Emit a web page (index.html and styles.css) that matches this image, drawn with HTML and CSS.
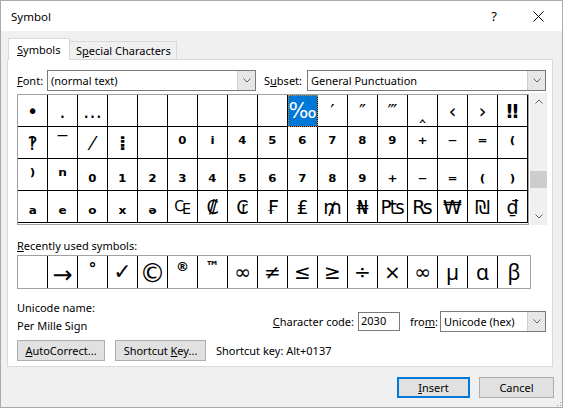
FILE: index.html
```html
<!DOCTYPE html>
<html>
<head>
<meta charset="utf-8">
<link rel="stylesheet" href="styles.css">
</head>
<body>
<div class="window">
  <div class="titlebar">
    <span class="title">Symbol</span>
    <span class="tb-btn help">?</span>
    <span class="tb-btn close"><svg width="11" height="11" viewBox="0 0 11 11"><path d="M0.5 0.5 L10.5 10.5 M10.5 0.5 L0.5 10.5" stroke="#000" stroke-width="1"/></svg></span>
  </div>
  <div class="tabs">
    <div class="tab active"><span><u>S</u>ymbols</span></div>
    <div class="tab"><span>S<u>p</u>ecial Characters</span></div>
  </div>
  <div class="panel">
    <div class="row-font">
      <span class="lbl font-lbl"><u>F</u>ont:</span>
      <div class="combo font-combo"><span class="combo-text">(normal text)</span><span class="drop"><svg width="8" height="5" viewBox="0 0 8 5"><path d="M0.5 0.5 L4 4 L7.5 0.5" fill="none" stroke="#606060"/></svg></span></div>
      <span class="lbl subset-lbl">S<u>u</u>bset:</span>
      <div class="combo subset-combo"><span class="combo-text">General Punctuation</span><span class="drop"><svg width="8" height="5" viewBox="0 0 8 5"><path d="M0.5 0.5 L4 4 L7.5 0.5" fill="none" stroke="#606060"/></svg></span></div>
    </div>
    <div class="grid-wrap">
      <div class="grid">
        <div class="c">•</div><div class="c">․</div><div class="c">…</div><div class="c"></div><div class="c"></div><div class="c"></div><div class="c"></div><div class="c"></div><div class="c"></div><div class="c sel">‰</div><div class="c">′</div><div class="c">″</div><div class="c">‴</div><div class="c">‸</div><div class="c">‹</div><div class="c">›</div><div class="c b">‼</div>
        <div class="c">‽</div><div class="c">‾</div><div class="c">⁄</div><div class="c b">⁞</div><div class="c"></div><div class="c b">⁰</div><div class="c b">ⁱ</div><div class="c b">⁴</div><div class="c b">⁵</div><div class="c b">⁶</div><div class="c b">⁷</div><div class="c b">⁸</div><div class="c b">⁹</div><div class="c b">⁺</div><div class="c b">⁻</div><div class="c b">⁼</div><div class="c b">⁽</div>
        <div class="c b">⁾</div><div class="c b">ⁿ</div><div class="c b">₀</div><div class="c b">₁</div><div class="c b">₂</div><div class="c b">₃</div><div class="c b">₄</div><div class="c b">₅</div><div class="c b">₆</div><div class="c b">₇</div><div class="c b">₈</div><div class="c b">₉</div><div class="c b">₊</div><div class="c b">₋</div><div class="c b">₌</div><div class="c b">₍</div><div class="c b">₎</div>
        <div class="c b">ₐ</div><div class="c b">ₑ</div><div class="c b">ₒ</div><div class="c b">ₓ</div><div class="c b">ₔ</div><div class="c">₠</div><div class="c">₡</div><div class="c">₢</div><div class="c">₣</div><div class="c">₤</div><div class="c">₥</div><div class="c">₦</div><div class="c">₧</div><div class="c">₨</div><div class="c">₩</div><div class="c">₪</div><div class="c">₫</div>
      </div>
      <div class="scrollbar">
        <div class="sb-btn"><svg width="8" height="5" viewBox="0 0 8 5"><path d="M0.5 4.5 L4 1 L7.5 4.5" fill="none" stroke="#606060"/></svg></div>
        <div class="sb-track"><div class="sb-thumb"></div></div>
        <div class="sb-btn"><svg width="8" height="5" viewBox="0 0 8 5"><path d="M0.5 0.5 L4 4 L7.5 0.5" fill="none" stroke="#606060"/></svg></div>
      </div>
    </div>
    <div class="recent-lbl"><u>R</u>ecently used symbols:</div>
    <div class="recent">
      <div class="r"></div><div class="r arrow">→</div><div class="r deg">°</div><div class="r check">✓</div><div class="r copy">©</div><div class="r reg">®</div><div class="r tm">™</div><div class="r">∞</div><div class="r">≠</div><div class="r">≤</div><div class="r">≥</div><div class="r">÷</div><div class="r">×</div><div class="r">∞</div><div class="r thin">µ</div><div class="r thin">α</div><div class="r thin last">β</div>
    </div>
    <div class="info">
      <div class="info-left">
        <div>Unicode name:</div>
        <div>Per Mille Sign</div>
      </div>
      <div class="info-right">
        <span class="lbl"><u>C</u>haracter code:</span>
        <div class="input">2030</div>
        <span class="lbl from-lbl">fro<u>m</u>:</span>
        <div class="combo from-combo"><span class="combo-text">Unicode (hex)</span><span class="drop"><svg width="8" height="5" viewBox="0 0 8 5"><path d="M0.5 0.5 L4 4 L7.5 0.5" fill="none" stroke="#606060"/></svg></span></div>
      </div>
    </div>
    <div class="btn-row">
      <div class="btn auto"><span><u>A</u>utoCorrect...</span></div>
      <div class="btn shortcut"><span>Shortcut <u>K</u>ey...</span></div>
      <span class="sk-text">Shortcut key: Alt+0137</span>
    </div>
  </div>
  <div class="footer">
    <div class="btn insert"><span><u>I</u>nsert</span></div>
    <div class="btn cancel"><span>Cancel</span></div>
    <div class="grip"><svg width="8" height="9" viewBox="0 0 8 9"><rect x="6" y="1" width="1" height="1" fill="#999"/><rect x="6" y="4" width="1" height="1" fill="#999"/><rect x="3" y="4" width="1" height="1" fill="#999"/><rect x="6" y="7" width="1" height="1" fill="#999"/><rect x="3" y="7" width="1" height="1" fill="#999"/><rect x="0" y="7" width="1" height="1" fill="#999"/></svg></div>
  </div>
</div>
</body>
</html>
```
FILE: styles.css
```css
html, body {
  margin: 0;
  padding: 0;
  background: #f0f0f0;
}
.window {
  width: 563px;
  height: 408px;
  box-sizing: border-box;
  border: 1px solid #aaaaaa;
  background: #f0f0f0;
  font-family: "Noto Sans", "DejaVu Sans", sans-serif;
  font-size: 11px;
  color: #000;
  display: flex;
  flex-direction: column;
  overflow: hidden;
}
u { text-decoration: underline; text-underline-offset: 1px; }

.titlebar {
  height: 30px;
  background: #fff;
  display: flex;
  align-items: center;
  padding-left: 10px;
  font-size: 11.5px;
}
.title { flex: 1; }
.tb-btn {
  width: 46px;
  height: 30px;
  display: flex;
  align-items: center;
  justify-content: center;
}
.help { font-size: 13px; margin-left: 2px; margin-right: -2px; }
.close { margin-right: 1px; }

.tabs {
  height: 28px;
  display: flex;
  align-items: flex-end;
  padding-left: 7px;
}
.tab {
  box-sizing: border-box;
  border: 1px solid #d9d9d9;
  border-bottom: none;
  display: flex;
  align-items: center;
  padding-bottom: 1px;
  white-space: nowrap;
}
.tab.active {
  width: 62px;
  height: 22px;
  margin-bottom: -1px;
  background: #fff;
  padding-left: 8px;
  position: relative;
  z-index: 1;
}
.tab:not(.active) {
  width: 108px;
  height: 18px;
  padding-left: 6px;
  margin-left: -1px;
  background: #f0f0f0;
}

.panel {
  margin-left: 6px;
  width: 546px;
  height: 308px;
  box-sizing: border-box;
  border: 1px solid #d9d9d9;
  background: #fff;
  padding: 10px 0 0 9px;
}

.row-font {
  display: flex;
  align-items: center;
  height: 21px;
}
.lbl { white-space: nowrap; }
.font-lbl { width: 30px; }
.subset-lbl { width: 43px; margin-left: 8px; }
.combo {
  box-sizing: border-box;
  height: 21px;
  border: 1px solid #7a7a7a;
  display: flex;
  align-items: stretch;
  background: #fff;
}
.combo-text {
  flex: 1;
  padding-left: 3px;
  display: flex;
  align-items: center;
  padding-bottom: 1px;
}
.drop {
  width: 17px;
  background: #e6e6e6;
  border-left: 1px solid #cfcfcf;
  display: flex;
  align-items: center;
  justify-content: center;
}
.font-combo { width: 209px; }
.subset-combo { width: 239px; }

.grid-wrap {
  display: flex;
  margin-top: 3px;
}
.grid {
  display: grid;
  grid-template-columns: repeat(17, 30px);
  grid-auto-rows: 32px;
  border: 1px solid #a0a0a0;
}
.c {
  box-sizing: border-box;
  border-right: 1px solid #000;
  border-bottom: 1px solid #000;
  font-family: "DejaVu Sans", sans-serif;
  font-size: 19px;
  line-height: 31px;
  text-align: center;
  overflow: hidden;
  white-space: nowrap;
  padding-top: 1px;
}
.c.b { font-weight: bold; }
.c.sel {
  background: #0078d7;
  color: #fff;
  font-size: 21px;
  outline: 1px dotted #c98a2e;
  outline-offset: -1px;
}
.scrollbar {
  width: 17px;
  height: 132px;
  margin-left: 1px;
  margin-top: -1px;
  background: #f0f0f0;
  display: flex;
  flex-direction: column;
}
.sb-btn {
  height: 17px;
  display: flex;
  align-items: center;
  justify-content: center;
}
.sb-track { flex: 1; }
.sb-thumb {
  margin-top: 61px;
  height: 17px;
  background: #cdcdcd;
}

.recent-lbl {
  margin-top: 13px;
  line-height: 16px;
  height: 16px;
}
.recent {
  margin-top: 1px;
  display: flex;
  width: max-content;
  border: 1px solid #a0a0a0;
  height: 34px;
  box-sizing: border-box;
}
.r {
  box-sizing: border-box;
  width: 30px;
  height: 32px;
  border-right: 1px solid #000;
  font-family: "DejaVu Sans", sans-serif;
  font-size: 20px;
  line-height: 32px;
  text-align: center;
}
.r.last { width: 32px; border-right: none; }
.r.arrow { font-size: 24px; line-height: 38px; }
.r.deg { font-size: 16px; line-height: 26px; font-weight: bold; }
.r.check { font-weight: bold; font-size: 22px; }
.r.copy { font-size: 26px; line-height: 34px; }
.r.reg { font-size: 13px; line-height: 22px; font-weight: bold; }
.r.tm { font-size: 14px; line-height: 20px; font-weight: bold; }
.r.thin { font-family: "Noto Sans", sans-serif; font-size: 21px; line-height: 32px; }

.info {
  margin-top: 10px;
  display: flex;
  justify-content: space-between;
  padding-right: 6px;
}
.info-left div { line-height: 18px; }
.info-right {
  margin-top: 9px;
  display: flex;
  align-items: center;
}
.input {
  box-sizing: border-box;
  width: 42px;
  height: 19px;
  border: 1px solid #7a7a7a;
  margin-left: 4px;
  padding-left: 2px;
  line-height: 16px;
}
.from-lbl { margin-left: 10px; width: 30px; }
.from-combo { width: 106px; }

.btn-row {
  margin-top: 5px;
  display: flex;
  align-items: center;
}
.btn {
  box-sizing: border-box;
  height: 21px;
  background: #e1e1e1;
  border: 1px solid #adadad;
  display: flex;
  align-items: center;
  justify-content: center;
  padding-bottom: 1px;
  white-space: nowrap;
}
.auto { width: 88px; }
.shortcut { width: 91px; margin-left: 10px; }
.sk-text { margin-left: 10px; }

.footer {
  flex: 1;
  display: flex;
  padding-top: 10px;
  padding-left: 396px;
}
.insert {
  width: 73px;
  border: 2px solid #0078d7;
}
.cancel {
  width: 75px;
  margin-left: 9px;
}
.grip {
  align-self: flex-end;
  width: 8px;
  height: 9px;
  flex-shrink: 0;
}
```
